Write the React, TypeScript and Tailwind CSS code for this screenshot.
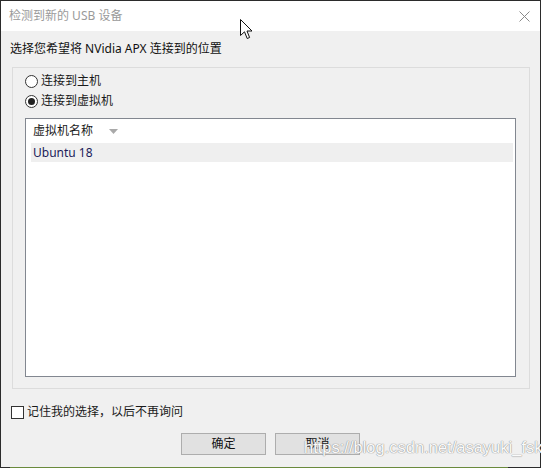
import React from "react";

export default function App() {
  return (
    <div className="relative w-[541px] h-[468px] overflow-hidden flex flex-col bg-[#2b2b2b] font-['Noto_Sans','Noto_Sans_CJK_SC',sans-serif] text-[12px] leading-[16px] text-[#1a1a1a]">
      <div className="flex-1 flex flex-col mt-[1px] mx-[1px] mr-[1px]">
        {/* title bar */}
        <div className="h-[30px] bg-white flex items-center justify-between pl-[8px] pr-[10px] shrink-0">
          <span className="text-[#9a9a9a]">检测到新的 USB 设备</span>
          <svg width="11" height="11" viewBox="0 0 11 11" className="text-[#8a8a8a]">
            <path d="M0.5 0.5 L10.5 10.5 M10.5 0.5 L0.5 10.5" stroke="currentColor" strokeWidth="1" />
          </svg>
        </div>
        {/* body */}
        <div className="flex-1 bg-[#f0f0f0] flex flex-col">
          <div className="pl-[9px] pt-[10px] h-[26px] text-[#111]">选择您希望将 NVidia APX 连接到的位置</div>
          <div className="ml-[11px] mt-[10px] w-[518px] h-[322px] border border-[#dcdcdc] flex flex-col pl-[12px] pt-[3px]">
            <label className="h-[20px] flex items-center gap-[3px]">
              <span className="w-[13px] h-[13px] rounded-full border border-[#333] bg-white" />
              <span>连接到主机</span>
            </label>
            <label className="h-[20px] flex items-center gap-[3px]">
              <span className="w-[13px] h-[13px] rounded-full border border-[#333] bg-white flex items-center justify-center">
                <span className="w-[7px] h-[7px] rounded-full bg-[#222]" />
              </span>
              <span>连接到虚拟机</span>
            </label>
            <div className="mt-[7px] w-[491px] h-[259px] border border-[#828790] bg-white flex flex-col">
              <div className="h-[24px] flex items-center pl-[7px]">
                <span>虚拟机名称</span>
                <svg width="9" height="5" viewBox="0 0 9 5" className="ml-[16px]">
                  <path d="M0 0 L9 0 L4.5 5 Z" fill="#a9a9a9" />
                </svg>
              </div>
              <div className="h-[19px] ml-[5px] mr-[2px] bg-[#efefef] flex items-center pl-[2px] text-[#1c1c5a]">
                Ubuntu 18
              </div>
            </div>
          </div>
          <label className="mt-[13px] h-[20px] pl-[10px] flex items-center gap-[3px]">
            <span className="w-[13px] h-[13px] border border-[#333] bg-white" />
            <span>记住我的选择，以后不再询问</span>
          </label>
          <div className="mt-[11px] ml-[180px] flex gap-[9px]">
            <button className="w-[85px] h-[22px] bg-[#e1e1e1] border border-[#adadad] flex items-center justify-center text-[12px] text-[#111]">
              确定
            </button>
            <button className="w-[85px] h-[22px] bg-[#e1e1e1] border border-[#adadad] flex items-center justify-center text-[12px] text-[#111]">
              取消
            </button>
          </div>
        </div>
      </div>
      {/* bottom edge */}
      <div className="h-[1px] flex shrink-0">
        <div className="w-[10px] bg-[#2b2b2b]" />
        <div className="w-[498px] bg-[#6a8a3c]" />
        <div className="flex-1 bg-[#2b2b2b]" />
      </div>

      {/* watermark overlay */}
      <div className="absolute left-[304px] top-[437px] font-['Liberation_Sans',sans-serif] text-[16.5px] leading-[20px] text-[#fafafa] [text-shadow:0_0_1px_#8a8a8a,0_0_1px_#8a8a8a] pointer-events-none whitespace-nowrap">
        https://blog.csdn.net/asayuki_fsk
      </div>

      {/* mouse cursor overlay */}
      <svg className="absolute left-[240px] top-[19px]" width="13" height="21" viewBox="0 0 13 21">
        <path
          d="M0.5 0.5 L0.5 16.5 L4.5 12.8 L7.2 19.5 L9.6 18.5 L7 12 L12 12 Z"
          fill="white"
          stroke="#111"
          strokeWidth="1"
          strokeLinejoin="miter"
        />
      </svg>
    </div>
  );
}
